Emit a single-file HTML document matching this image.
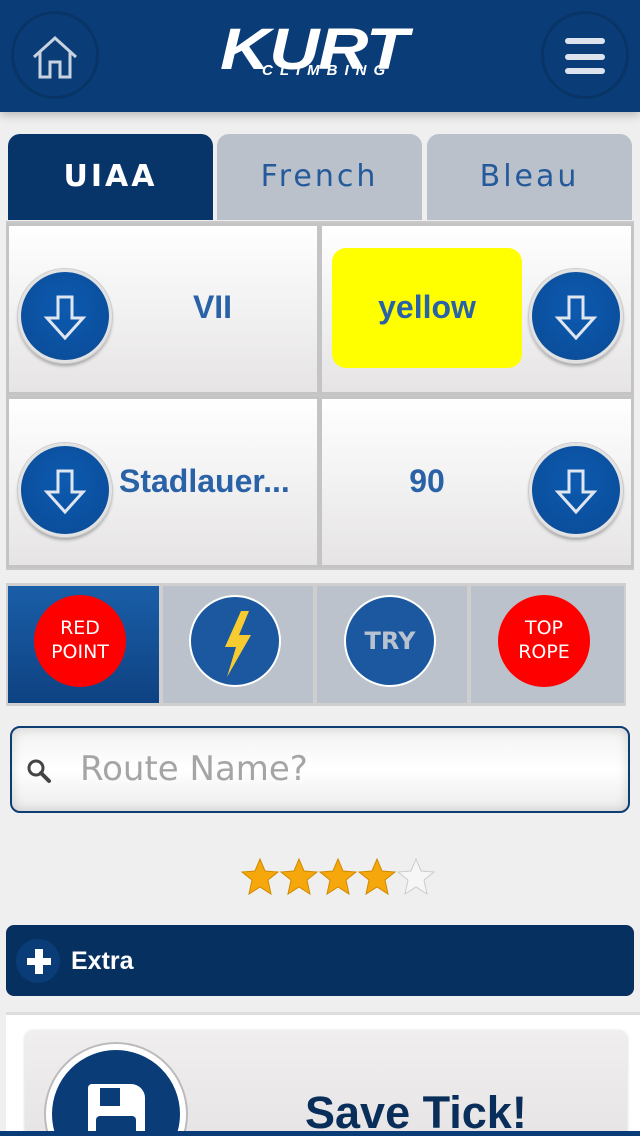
<!DOCTYPE html>
<html style="width:640px;height:1136px;overflow:hidden"><head><meta charset="utf-8"><style>
*{box-sizing:border-box;margin:0;padding:0}
body{width:640px;height:1136px;overflow:hidden;background:#efefef;font-family:"Liberation Sans","DejaVu Sans",sans-serif;position:relative}
.a{position:absolute}
.hdr{left:0;top:0;width:640px;height:112px;background:#0a3d78;box-shadow:0 4px 8px rgba(0,0,0,.2)}
.hc{width:88px;height:88px;border-radius:50%;border:3px solid #083466;top:11px}
.tab{top:134px;height:86px;border-radius:12px 12px 0 0;font-weight:bold;font-size:30px;letter-spacing:3px;text-align:center;line-height:86px;font-family:"DejaVu Sans",sans-serif}
.cell{background:linear-gradient(#fff,#e6e4e4);border:3px solid #c4c4c4}
.dn{width:94px;height:94px;border-radius:50%;background:radial-gradient(circle at 50% 40%,#0d5ab0,#0a4a95);border:3px solid #e2e2e2;box-shadow:0 0 0 1px #ccc,0 3px 3px rgba(0,0,0,.3)}
.dn svg{position:absolute;left:22px;top:22px}
.lbl{color:#2a62a8;font-weight:bold;font-size:32px;text-align:center}
.bc{top:586px;height:117px;background:#bbc2cb}
.circ{width:92px;height:92px;border-radius:50%;top:595px;text-align:center;color:#fff;font-family:"DejaVu Sans",sans-serif}
</style></head><body>
<div class="a hdr"></div>
<div class="a hc" style="left:11px"></div>
<svg class="a" style="left:30px;top:35px" width="50" height="45" viewBox="0 0 50 45"><path d="M4 22 L25 3 L46 22 M10 17 V42 H20 V27 H30 V42 H40 V17" fill="none" stroke="#c8d2e0" stroke-width="3"/></svg>
<div class="a hc" style="left:541px"></div>
<div class="a" style="left:565px;top:38px;width:40px;height:6px;border-radius:3px;background:#dde3ec"></div>
<div class="a" style="left:565px;top:54px;width:40px;height:6px;border-radius:3px;background:#dde3ec"></div>
<div class="a" style="left:565px;top:68px;width:40px;height:6px;border-radius:3px;background:#dde3ec"></div>
<div class="a" style="left:220px;top:24px;color:#fff;font-weight:900;font-style:italic;font-size:58px;line-height:52px;letter-spacing:-1px;transform:scaleX(1.2);transform-origin:left">KURT</div>
<div class="a" style="left:262px;top:62px;color:#fff;font-weight:bold;font-style:italic;font-size:15px;letter-spacing:7px">CLIMBING</div>

<div class="a tab" style="left:8px;width:205px;background:#073569;color:#fff">UIAA</div>
<div class="a tab" style="left:217px;width:205px;background:#bac1cb;color:#245a9a;font-weight:normal">French</div>
<div class="a tab" style="left:427px;width:205px;background:#bac1cb;color:#245a9a;font-weight:normal">Bleau</div>

<div class="a" style="left:6px;top:221px;width:628px;height:349px;background:#c8c8c8"></div>
<div class="a cell" style="left:6px;top:223px;width:314px;height:172px"></div>
<div class="a cell" style="left:319px;top:223px;width:315px;height:172px"></div>
<div class="a cell" style="left:6px;top:396px;width:314px;height:172px"></div>
<div class="a cell" style="left:319px;top:396px;width:315px;height:172px"></div>
<div class="a" style="left:332px;top:248px;width:190px;height:120px;background:#ff0;border-radius:14px"></div>
<div class="a lbl" style="left:120px;top:289px;width:185px">VII</div>
<div class="a lbl" style="left:332px;top:289px;width:190px">yellow</div>
<div class="a lbl" style="left:119px;top:463px;width:195px;text-align:left">Stadlauer...</div>
<div class="a lbl" style="left:332px;top:463px;width:190px">90</div>

<div class="a dn" style="left:18px;top:269px"><svg width="44" height="48" viewBox="0 0 44 48"><path d="M15 3 H29 V24 H40 L22 44 L4 24 H15 Z" fill="none" stroke="#dfe6f0" stroke-width="3"/></svg></div>
<div class="a dn" style="left:529px;top:269px"><svg width="44" height="48" viewBox="0 0 44 48"><path d="M15 3 H29 V24 H40 L22 44 L4 24 H15 Z" fill="none" stroke="#dfe6f0" stroke-width="3"/></svg></div>
<div class="a dn" style="left:18px;top:443px"><svg width="44" height="48" viewBox="0 0 44 48"><path d="M15 3 H29 V24 H40 L22 44 L4 24 H15 Z" fill="none" stroke="#dfe6f0" stroke-width="3"/></svg></div>
<div class="a dn" style="left:529px;top:443px"><svg width="44" height="48" viewBox="0 0 44 48"><path d="M15 3 H29 V24 H40 L22 44 L4 24 H15 Z" fill="none" stroke="#dfe6f0" stroke-width="3"/></svg></div>

<div class="a" style="left:6px;top:583px;width:620px;height:123px;background:#cfcfcf"></div>
<div class="a bc" style="left:8px;width:151px;background:linear-gradient(#1a5ea8,#0e4282)"></div>
<div class="a bc" style="left:163px;width:150px"></div>
<div class="a bc" style="left:317px;width:150px"></div>
<div class="a bc" style="left:471px;width:153px"></div>
<div class="a circ" style="left:34px;background:#f00;font-size:19px;line-height:24px;padding-top:21px">RED<br>POINT</div>
<div class="a circ" style="left:189px;background:#1b58a0;border:2px solid #fff"><svg width="88" height="88" viewBox="0 0 88 88"><path d="M50 14 L34 50 H45 L36 80 L60 38 H48 L58 14 Z" fill="#f8cc30"/></svg></div>
<div class="a circ" style="left:344px;background:#1b58a0;border:2px solid #fff;color:#b9c2cf;font-weight:bold;font-size:24px;line-height:88px">TRY</div>
<div class="a circ" style="left:498px;background:#f00;font-size:19px;line-height:24px;padding-top:21px">TOP<br>ROPE</div>

<div class="a" style="left:10px;top:726px;width:620px;height:87px;border:2px solid #0d3d73;border-radius:10px;background:linear-gradient(#f2f2f2,#fff 50%,#ececec);box-shadow:inset 0 0 12px rgba(0,0,0,.15)"></div>
<svg class="a" style="left:26px;top:758px" width="26" height="26" viewBox="0 0 26 26"><circle cx="10" cy="10" r="7" fill="none" stroke="#444" stroke-width="3"/><path d="M15 15 L23 23" stroke="#444" stroke-width="4" stroke-linecap="round"/></svg>
<div class="a" style="left:80px;top:749px;font-size:34px;color:#a5a5a5;font-family:'DejaVu Sans',sans-serif">Route Name?</div>

<svg class="a" style="left:241px;top:858px" width="200" height="40" viewBox="0 0 200 40">
<defs><path id="s" d="M19 1 L24 13 L37 14 L27 22 L30 36 L19 29 L8 36 L11 22 L1 14 L14 13 Z"/></defs>
<use href="#s" x="0" fill="#f5a70c" stroke="#d08a00"/>
<use href="#s" x="39" fill="#f5a70c" stroke="#d08a00"/>
<use href="#s" x="78" fill="#f5a70c" stroke="#d08a00"/>
<use href="#s" x="117" fill="#f5a70c" stroke="#d08a00"/>
<use href="#s" x="156" fill="#f6f6f6" stroke="#ccc"/>
</svg>

<div class="a" style="left:6px;top:925px;width:628px;height:71px;background:#06305f;border-radius:8px"></div>
<div class="a" style="left:16px;top:939px;width:44px;height:44px;border-radius:50%;background:#0a3d78"></div>
<div class="a" style="left:27px;top:958px;width:24px;height:7px;background:#fff"></div>
<div class="a" style="left:35px;top:949px;width:8px;height:25px;background:#fff"></div>
<div class="a" style="left:71px;top:947px;color:#fff;font-weight:bold;font-size:25px">Extra</div>

<div class="a" style="left:6px;top:1012px;width:634px;height:119px;background:#fff;border-top:3px solid #ddd;overflow:hidden">
<div class="a" style="left:19px;top:15px;width:602px;height:110px;border-radius:8px;background:linear-gradient(#f0eeee,#e6e4e4);box-shadow:0 1px 3px rgba(0,0,0,.2)"></div>
<div class="a" style="left:40px;top:29px;width:140px;height:140px;border-radius:50%;background:#0a3d78;border:6px solid #fff;box-shadow:0 0 0 2px #bbb"></div>
<div class="a" style="left:82px;top:69px;width:57px;height:60px;background:#fff;border-radius:4px 14px 0 0"></div>
<div class="a" style="left:94px;top:73px;width:20px;height:18px;background:#0a3d78"></div>
<div class="a" style="left:90px;top:101px;width:40px;height:30px;background:#0a3d78;border-radius:4px"></div>
<div class="a" style="left:299px;top:72px;font-weight:bold;font-size:45px;color:#0a2e5a">Save Tick!</div>
</div>
<div class="a" style="left:0;top:1131px;width:640px;height:5px;background:#0a3d78"></div>
</body></html>
